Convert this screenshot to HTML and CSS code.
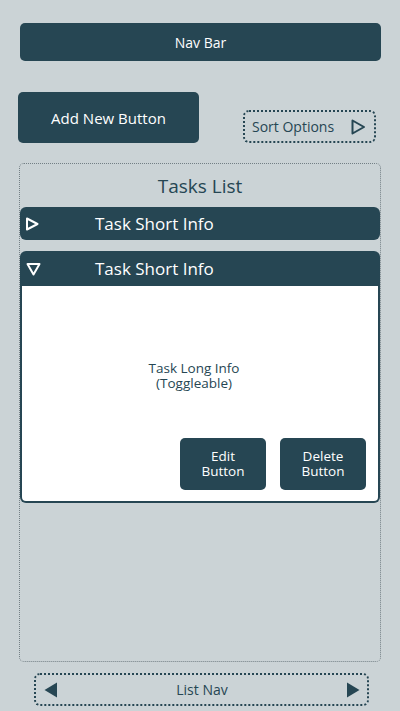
FILE: index.html
```html
<!DOCTYPE html>
<html lang="en">
<head>
  <meta charset="UTF-8">
  <meta name="viewport" content="width=device-width, initial-scale=1.0">
  <title>Tasks</title>
  <link rel="stylesheet" href="styles.css">
</head>
<body>
  <div class="screen">
    <div class="nav-bar">Nav Bar</div>

    <div class="actions">
      <button class="add-btn" type="button">Add New Button</button>
      <div class="sort-options">
        <span>Sort Options</span>
        <svg width="16" height="16" viewBox="0 0 16 16">
          <path d="M2.5 1.5 L14 8 L2.5 14.5 Z" fill="none" stroke="#264653" stroke-width="2" stroke-linejoin="round"/>
        </svg>
      </div>
    </div>

    <div class="tasks-panel">
      <h2 class="tasks-title">Tasks List</h2>

      <div class="task">
        <div class="task-head">
          <svg class="toggle" width="14" height="14" viewBox="0 0 14 14">
            <path d="M2 1.5 L12.5 7 L2 12.5 Z" fill="none" stroke="#fff" stroke-width="2" stroke-linejoin="round"/>
          </svg>
          <span>Task Short Info</span>
        </div>
      </div>

      <div class="task open">
        <div class="task-head">
          <svg class="toggle" width="15" height="14" viewBox="0 0 15 14">
            <path d="M1.5 2 L13.5 2 L7.5 12.5 Z" fill="none" stroke="#fff" stroke-width="2" stroke-linejoin="round"/>
          </svg>
          <span>Task Short Info</span>
        </div>
        <div class="task-body">
          <p class="task-long">Task Long Info<br>(Toggleable)</p>
          <div class="task-buttons">
            <button class="task-btn" type="button">Edit<br>Button</button>
            <button class="task-btn" type="button">Delete<br>Button</button>
          </div>
        </div>
      </div>
    </div>

    <div class="list-nav">
      <svg width="14" height="16" viewBox="0 0 14 16"><path d="M13 0.5 L13 15.5 L0.5 8 Z" fill="#264653"/></svg>
      <span>List Nav</span>
      <svg width="14" height="16" viewBox="0 0 14 16"><path d="M1 0.5 L1 15.5 L13.5 8 Z" fill="#264653"/></svg>
    </div>
  </div>
</body>
</html>
```

FILE: styles.css
```css
body {
  margin: 0;
  background-color: #cbd3d6;
  font-family: "Open Sans", Lato, sans-serif;
  color: #264653;
}

.screen {
  height: 711px;
  box-sizing: border-box;
  padding: 23px 19px 0 18px;
  display: flex;
  flex-direction: column;
}

.nav-bar {
  height: 38px;
  margin-left: 2px;
  background-color: #264653;
  border-radius: 5px;
  color: #fff;
  font-size: 14px;
  display: flex;
  align-items: center;
  justify-content: center;
}

.actions {
  margin-top: 31px;
  display: flex;
  align-items: flex-end;
  gap: 44px;
}

.add-btn {
  width: 181px;
  height: 51px;
  border: none;
  border-radius: 5px;
  background-color: #264653;
  color: #fff;
  font-family: inherit;
  font-size: 15px;
  padding: 0;
}

.sort-options {
  width: 133px;
  height: 33px;
  box-sizing: border-box;
  border: 2px dotted #264653;
  border-radius: 6px;
  display: flex;
  align-items: center;
  justify-content: space-between;
  padding: 0 8px 0 7px;
  font-size: 14px;
}

.tasks-panel {
  margin: 20px 0 0 1px;
  height: 499px;
  box-sizing: border-box;
  border: 1px dotted #737f85;
  border-radius: 5px;
}

.tasks-title {
  margin: 0;
  height: 43px;
  font-size: 19px;
  font-weight: normal;
  display: flex;
  align-items: center;
  justify-content: center;
}

.task {
  margin-bottom: 11px;
}

.task-head {
  height: 33px;
  background-color: #264653;
  border-radius: 6px;
  color: #fff;
  font-size: 17px;
  display: flex;
  align-items: center;
  padding-left: 5px;
}

.task-head span {
  margin-left: 56px;
}

.task.open .task-head {
  height: 35px;
  border-radius: 6px 6px 0 0;
  padding-left: 6px;
}

.task.open .task-head span {
  margin-left: 54px;
}

.task-body {
  height: 217px;
  box-sizing: border-box;
  background-color: #fff;
  border: 2px solid #264653;
  border-top: none;
  border-radius: 0 0 6px 6px;
  padding: 75px 12px 0 0;
}

.task-long {
  margin: 0;
  text-align: center;
  font-size: 13.5px;
  line-height: 15px;
}

.task-buttons {
  margin-top: 47px;
  display: flex;
  justify-content: flex-end;
  gap: 14px;
}

.task-btn {
  width: 86px;
  height: 52px;
  border: none;
  border-radius: 5px;
  background-color: #264653;
  color: #fff;
  font-family: inherit;
  font-size: 13.5px;
  line-height: 15px;
  padding: 0;
}

.list-nav {
  margin: 11px 12px 0 16px;
  height: 33px;
  box-sizing: border-box;
  border: 2px dotted #264653;
  border-radius: 6px;
  display: flex;
  align-items: center;
  justify-content: space-between;
  padding: 0 7px 0 8px;
  font-size: 14px;
}
```
